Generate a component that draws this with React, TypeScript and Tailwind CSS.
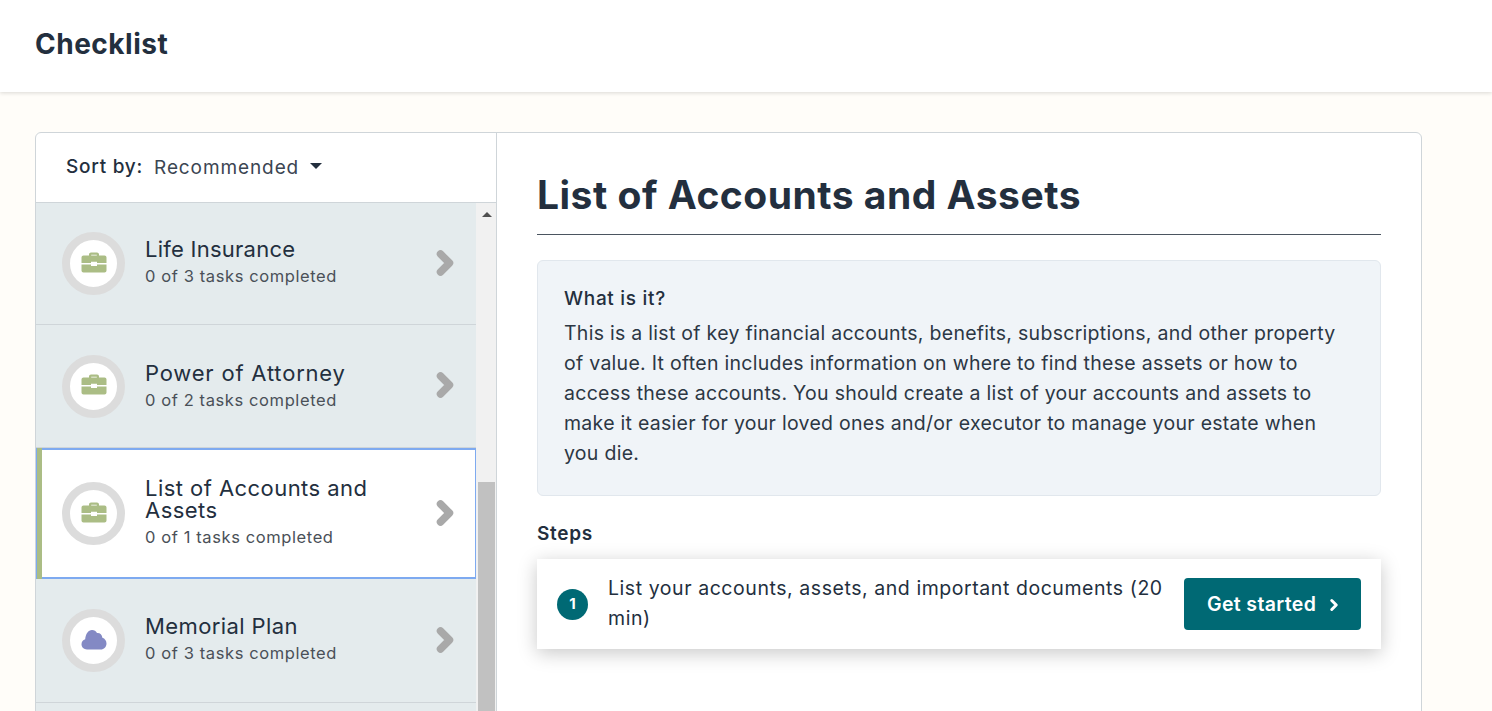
import { ChevronRight } from 'lucide-react';

const Briefcase = () => (
    <svg width="26" height="22" viewBox="0 0 26 22" fill="#abbd85" className="-mt-[2px]">
        <path d="M8 4V2.500C8 1.400 8.900.5 10 .5h6c1.100 0 2 .9 2 2V4h-2.200V2.700h-5.600V4H8z" />
        <path d="M2.500 3.500h21c1.100 0 2 .9 2 2v5.500H16V9.800h-6V11H.5V5.500c0-1.100.9-2 2-2z" />
        <path d="M.5 12.500H10v1.500h6v-1.500h9.500v6c0 1.100-.9 2-2 2h-21c-1.100 0-2-.9-2-2v-6z" />
    </svg>
);

const Cloud = () => (
    <svg width="26" height="22" viewBox="0 0 26 22" fill="#8389c4" className="-mt-[2px]">
        <path d="M6 20.500C2.900 20.500.5 18.200.5 15.300c0-2.400 1.500-4.300 3.700-5C4.500 5.100 7.300 1 11 1c2.400 0 4 1.200 5 3.100 2.800-.4 5 1.500 5.400 4.600 2.500.8 4.100 3.100 4.100 5.800 0 3.400-2.500 6-5.800 6H6z" />
    </svg>
);

const tasks = [
    { title: 'Life Insurance', done: '0 of 3 tasks completed', icon: <Briefcase />, h: 'h-[122px]', text: 'mb-[4px]', track: 'tracking-[0.25px]' },
    { title: 'Power of Attorney', done: '0 of 2 tasks completed', icon: <Briefcase />, h: 'h-[123px]', text: 'mb-[1px]', track: 'tracking-[0.8px]' },
    { title: 'List of Accounts and Assets', done: '0 of 1 tasks completed', icon: <Briefcase />, h: 'h-[131px]', text: 'mb-[3px]', track: 'tracking-[0.45px]', active: true },
    { title: 'Memorial Plan', done: '0 of 3 tasks completed', icon: <Cloud />, h: 'h-[124px]', text: 'mb-[4px]', track: 'tracking-[0.4px]' },
];

function TaskRow({ task }: { task: (typeof tasks)[number] }) {
    return (
        <div
            className={`${task.h} flex items-center shrink-0 pl-[26px] ${task.active
                ? 'bg-white border-y-2 border-r border-[#7eaaf0] relative pr-[12px]'
                : 'bg-[#e4ebed] border-b border-[#cfd5d9] pr-[13px]'
                }`}
        >
            {task.active && <div className="absolute left-0 -top-[2px] -bottom-[2px] w-[6px] bg-[#abbd85] border-l border-[#7eaaf0]" />}
            <div className="w-[63px] h-[63px] rounded-full bg-white border-[8px] border-[#dcdcdc] flex items-center justify-center shrink-0">
                {task.icon}
            </div>
            <div className={`ml-[20px] flex-1 min-w-0 pr-[30px] ${task.text}`}>
                <div className={`text-[22px] leading-[22px] text-[#232f3e] ${task.track}`}>{task.title}</div>
                <div className="text-[16.500px] leading-[20px] mt-[6px] text-[#4a5058] tracking-[0.6px]">{task.done}</div>
            </div>
            <ChevronRight size={36} strokeWidth={5} className="text-[#a9a9a9] shrink-0 -mt-[2px]" />
        </div>
    );
}

export default function App() {
    return (
        <div className="h-[711px] overflow-hidden bg-[#fffdf9] text-[#232f3e] font-['Inter','Open_Sans',sans-serif]">
            <header className="h-[92px] bg-white shadow-[0_1px_4px_rgba(0,0,0,0.15)] flex items-center pl-[35px] pb-[4px]">
                <h1 className="text-[28px] font-bold tracking-[0.5px]">Checklist</h1>
            </header>

            <main className="mt-[40px] ml-[35px] w-[1387px] h-[700px] bg-white border border-[#cfd5d9] rounded-md flex overflow-hidden">
                <aside className="w-[461px] shrink-0 border-r border-[#cfd5d9] flex flex-col">
                    <div className="h-[70px] shrink-0 border-b border-[#cfd5d9] flex items-center pl-[30px] text-[19px]">
                        <span className="font-medium tracking-[0.75px]">Sort by:</span>
                        <span className="ml-[11px] mt-[1px] text-[#3b4552] tracking-[0.9px]">Recommended</span>
                        <span className="ml-[11px] mb-[3px] w-0 h-0 border-x-[6px] border-x-transparent border-t-[6px] border-t-[#232f3e]" />
                    </div>
                    <div className="flex flex-1 min-h-0">
                        <div className="w-[440px] shrink-0 flex flex-col">
                            {tasks.map((t) => (
                                <TaskRow key={t.title} task={t} />
                            ))}
                            <div className="flex-1 bg-[#e4ebed]" />
                        </div>
                        <div className="flex-1 bg-[#f1f1f1] pl-[2px] pr-[1px] relative">
                            <div className="absolute left-[6px] top-[9px] w-0 h-0 border-x-[5px] border-x-transparent border-b-[5px] border-b-[#505050]" />
                            <div className="mt-[279px] h-[400px] bg-[#c1c1c1]" />
                        </div>
                    </div>
                </aside>

                <section className="flex-1 pl-[40px] pr-[40px] pt-[38px]">
                    <h2 className="text-[39px] leading-[48px] font-bold pb-[15px] border-b border-[#4b5560] tracking-[0.5px]">List of Accounts and Assets</h2>
                    <div className="mt-[25px] h-[236px] bg-[#f0f4f8] border border-[#e1e7ed] rounded-md pl-[26px] pr-[30px] pt-[25px]">
                        <div className="text-[19px] leading-[26px] font-medium tracking-[0.7px]">What is it?</div>
                        <p className="mt-[6px] text-[19.500px] leading-[30px] text-[#2c3744] tracking-[0.28px]">
                            This is a list of key financial accounts, benefits, subscriptions, and other property of value. It often includes information on where to find these assets or how to access these accounts. You should create a list of your accounts and assets to make it easier for your loved ones and/or executor to manage your estate when you die.
                        </p>
                    </div>
                    <div className="mt-[25px] text-[19px] leading-[26px] font-semibold tracking-[0.7px]">Steps</div>
                    <div className="mt-[12px] h-[90px] bg-white shadow-[0_4px_18px_rgba(0,0,0,0.22)] flex items-center pl-[20px] pr-[20px]">
                        <div className="w-[31px] h-[31px] rounded-full bg-[#006974] text-white text-[15px] font-bold flex items-center justify-center shrink-0">1</div>
                        <div className="ml-[20px] mb-[3px] flex-1 text-[19.500px] leading-[30px] tracking-[0.56px]">List your accounts, assets, and important documents (20 min)</div>
                        <button className="ml-[20px] w-[177px] h-[52px] shrink-0 rounded bg-[#006974] text-white text-[19.500px] font-semibold tracking-[0.35px] flex items-center pl-[23px] pt-[2px] gap-[9px]">
                            Get started
                            <ChevronRight size={18} strokeWidth={4} />
                        </button>
                    </div>
                </section>
            </main>
        </div>
    );
}
